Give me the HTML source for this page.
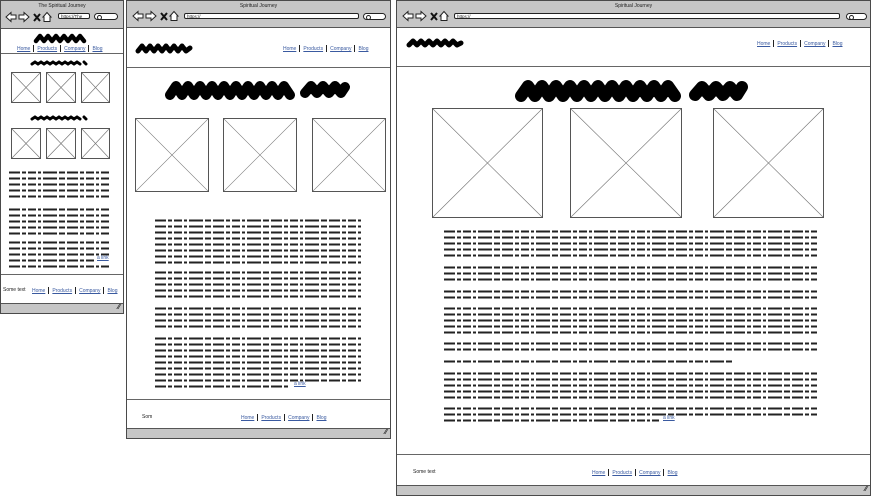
<!DOCTYPE html>
<html><head><meta charset="utf-8"><style>
*{margin:0;padding:0;box-sizing:border-box}
body{width:872px;height:500px;background:#fff;position:relative;overflow:hidden;font-family:"Liberation Sans",sans-serif}
.br{position:absolute;border:1.5px solid #4a4a4a;background:#fff;overflow:hidden}
.tb{position:absolute;left:0;right:0;top:0;background:#c6c6c6;border-bottom:1.5px solid #555}
.title{position:absolute;top:2px;left:0;right:0;text-align:center;font-size:5px;color:#222}
.url{position:absolute;background:#fff;border:1px solid #222;border-radius:2px;height:6px;font-size:4.5px;line-height:5px;padding-left:2px;color:#222}
.pill{position:absolute;background:#fff;border:1px solid #222;border-radius:4px;height:7px}
.pill:before{content:"";position:absolute;left:2px;top:1px;width:3px;height:3px;border:0.8px solid #222;border-radius:50%}
.bb{position:absolute;left:0;right:0;bottom:0;height:10px;background:#c6c6c6;border-top:1px solid #555}
.bb:after{content:"⁄⁄";position:absolute;right:3px;top:0;font-size:7px;font-weight:bold;color:#222}
.hl{position:absolute;left:0;right:0;height:0;border-top:1.5px solid #666}
.nav{position:absolute;font-size:5px;color:#3a5aa0;white-space:nowrap}
.nav a{color:#3a5aa0;text-decoration:underline}
.nav i{display:inline-block;width:1px;height:7px;background:#222;margin:0 3px;vertical-align:-2px}
.ft{position:absolute;font-size:5px;color:#222}
.img{position:absolute;border:1.3px solid #555;background:#fff}
.img svg{position:absolute;left:0;top:0;width:100%;height:100%}
.tx{position:absolute;background:repeating-linear-gradient(to bottom,transparent 0 .5px,#222 .5px 2.3px,transparent 2.3px 6px);
-webkit-mask-image:repeating-linear-gradient(to right,#000 0 11px,transparent 11px 13px,#000 13px 17px,transparent 17px 19px,#000 19px 27px,transparent 27px 29px,#000 29px 32px,transparent 32px 34px,#000 34px 48px,transparent 48px 50px,#000 50px 56px,transparent 56px 58px)}
.lk{position:absolute;font-size:5px;color:#3a5aa0;text-decoration:underline}
svg.sq{position:absolute}
</style></head><body>

<!-- Browser 1 -->
<div class="br" style="left:0;top:0;width:124px;height:314px">
 <div class="tb" style="height:28px">
  <div class="title">The Spiritual Journey</div>
  <svg style="position:absolute;left:4px;top:10px" width="52" height="12" viewBox="0 0 52 12">
   <path d="M1 6 L6 1.5 L6 4 L11 4 L11 8 L6 8 L6 10.5 Z" fill="#fff" stroke="#222" stroke-width="1"/>
   <path d="M24 6 L19 1.5 L19 4 L14 4 L14 8 L19 8 L19 10.5 Z" fill="#fff" stroke="#222" stroke-width="1"/>
   <path d="M29 3 L35 10 M35 3 L29 10" stroke="#111" stroke-width="2"/>
   <path d="M38 6 L42 1.5 L46 6 L45 6 L45 10.5 L39 10.5 L39 6 Z" fill="#fff" stroke="#222" stroke-width="1"/>
  </svg>
  <div class="url" style="left:57px;top:12px;width:32px">https://The</div>
  <div class="pill" style="left:93px;top:12px;width:24px"></div>
 </div>
 <svg class="sq" style="left:32px;top:31px" width="56" height="12" viewBox="0 0 56 12"><path d="M3 9 l4 -5 4 5 4 -5 4 5 4 -5 4 5 4 -5 4 5 4 -5 4 5 4 -5 4 5" fill="none" stroke="#000" stroke-width="4.5" stroke-linecap="round" stroke-linejoin="round"/></svg>
 <div class="nav" style="left:16px;top:44px"><a>Home</a><i></i><a>Products</a><i></i><a>Company</a><i></i><a>Blog</a></div>
 <div class="hl" style="top:52px"></div>
 <svg class="sq" style="left:29px;top:58px" width="62" height="8" viewBox="0 0 62 8"><path d="M2 5 l3 -2 3 2 3 -2 3 2 3 -2 3 2 3 -2 3 2 3 -2 3 2 3 -2 3 2 3 -2 3 2 3 -2 3 2 M54 3 l2 2" fill="none" stroke="#000" stroke-width="3" stroke-linecap="round"/></svg>
 <div class="img" style="left:10px;top:71px;width:30px;height:31px"><svg viewBox="0 0 10 10" preserveAspectRatio="none"><path d="M0 0L10 10M10 0L0 10" stroke="#777" stroke-width=".25"/></svg></div>
 <div class="img" style="left:45px;top:71px;width:30px;height:31px"><svg viewBox="0 0 10 10" preserveAspectRatio="none"><path d="M0 0L10 10M10 0L0 10" stroke="#777" stroke-width=".25"/></svg></div>
 <div class="img" style="left:80px;top:71px;width:29px;height:31px"><svg viewBox="0 0 10 10" preserveAspectRatio="none"><path d="M0 0L10 10M10 0L0 10" stroke="#777" stroke-width=".25"/></svg></div>
 <svg class="sq" style="left:29px;top:113px" width="62" height="8" viewBox="0 0 62 8"><path d="M2 5 l3 -2 3 2 3 -2 3 2 3 -2 3 2 3 -2 3 2 3 -2 3 2 3 -2 3 2 3 -2 3 2 3 -2 3 2 M54 3 l2 2" fill="none" stroke="#000" stroke-width="3" stroke-linecap="round"/></svg>
 <div class="img" style="left:10px;top:127px;width:30px;height:31px"><svg viewBox="0 0 10 10" preserveAspectRatio="none"><path d="M0 0L10 10M10 0L0 10" stroke="#777" stroke-width=".25"/></svg></div>
 <div class="img" style="left:45px;top:127px;width:30px;height:31px"><svg viewBox="0 0 10 10" preserveAspectRatio="none"><path d="M0 0L10 10M10 0L0 10" stroke="#777" stroke-width=".25"/></svg></div>
 <div class="img" style="left:80px;top:127px;width:29px;height:31px"><svg viewBox="0 0 10 10" preserveAspectRatio="none"><path d="M0 0L10 10M10 0L0 10" stroke="#777" stroke-width=".25"/></svg></div>
 <div class="tx" style="left:8px;top:170px;width:100px;height:27px"></div>
 <div class="tx" style="left:8px;top:207px;width:100px;height:27px"></div>
 <div class="tx" style="left:8px;top:240px;width:100px;height:15px"></div>
 <div class="tx" style="left:8px;top:258px;width:86px;height:3px"></div>
 <div class="lk" style="left:96px;top:254px">a link</div>
 <div class="tx" style="left:8px;top:264px;width:100px;height:3px"></div>
 <div class="hl" style="top:273px"></div>
 <div class="ft" style="left:2px;top:286px">Some text</div>
 <div class="nav" style="left:31px;top:286px"><a>Home</a><i></i><a>Products</a><i></i><a>Company</a><i></i><a>Blog</a></div>
 <div class="bb"></div>
</div>

<!-- Browser 2 -->
<div class="br" style="left:126px;top:0;width:265px;height:439px">
 <div class="tb" style="height:27px">
  <div class="title">Spiritual Journey</div>
  <svg style="position:absolute;left:5px;top:9px" width="52" height="12" viewBox="0 0 52 12">
   <path d="M1 6 L6 1.5 L6 4 L11 4 L11 8 L6 8 L6 10.5 Z" fill="#fff" stroke="#222" stroke-width="1"/>
   <path d="M24 6 L19 1.5 L19 4 L14 4 L14 8 L19 8 L19 10.5 Z" fill="#fff" stroke="#222" stroke-width="1"/>
   <path d="M29 3 L35 10 M35 3 L29 10" stroke="#111" stroke-width="2"/>
   <path d="M38 6 L42 1.5 L46 6 L45 6 L45 10.5 L39 10.5 L39 6 Z" fill="#fff" stroke="#222" stroke-width="1"/>
  </svg>
  <div class="url" style="left:57px;top:12px;width:175px">https://</div>
  <div class="pill" style="left:236px;top:12px;width:23px"></div>
 </div>
 <svg class="sq" style="left:8px;top:40px" width="58" height="14" viewBox="0 0 58 14"><path d="M3 10 l4 -5 4 5 4 -5 4 5 4 -5 4 5 4 -5 4 5 4 -5 4 5 4 -5 4 5 4 -3" fill="none" stroke="#000" stroke-width="5" stroke-linecap="round" stroke-linejoin="round"/></svg>
 <div class="nav" style="left:156px;top:44px"><a>Home</a><i></i><a>Products</a><i></i><a>Company</a><i></i><a>Blog</a></div>
 <div class="hl" style="top:66px"></div>
 <svg class="sq" style="left:38px;top:76px" width="190" height="24" viewBox="0 0 190 24"><path d="M5 18 l6 -9 6 9 6 -9 6 9 6 -9 6 9 6 -9 6 9 6 -9 6 9 6 -9 6 9 6 -9 6 9 6 -9 6 9 6 -9 6 9 6 -9 6 9 M140 16 l6 -7 6 7 6 -7 6 7 6 -7 6 7 4 -6" fill="none" stroke="#000" stroke-width="10" stroke-linecap="round" stroke-linejoin="round"/></svg>
 <div class="img" style="left:8px;top:117px;width:74px;height:74px"><svg viewBox="0 0 10 10" preserveAspectRatio="none"><path d="M0 0L10 10M10 0L0 10" stroke="#777" stroke-width=".08"/></svg></div>
 <div class="img" style="left:96px;top:117px;width:74px;height:74px"><svg viewBox="0 0 10 10" preserveAspectRatio="none"><path d="M0 0L10 10M10 0L0 10" stroke="#777" stroke-width=".08"/></svg></div>
 <div class="img" style="left:185px;top:117px;width:74px;height:74px"><svg viewBox="0 0 10 10" preserveAspectRatio="none"><path d="M0 0L10 10M10 0L0 10" stroke="#777" stroke-width=".08"/></svg></div>
 <div class="tx" style="left:28px;top:218px;width:206px;height:45px"></div>
 <div class="tx" style="left:28px;top:270px;width:206px;height:27px"></div>
 <div class="tx" style="left:28px;top:306px;width:206px;height:21px"></div>
 <div class="tx" style="left:28px;top:336px;width:206px;height:45px"></div>
 <div class="tx" style="left:28px;top:384px;width:135px;height:3px"></div>
 <div class="lk" style="left:167px;top:380px">a link</div>
 <div class="hl" style="top:398px"></div>
 <div class="ft" style="left:15px;top:413px">Som</div>
 <div class="nav" style="left:114px;top:413px"><a>Home</a><i></i><a>Products</a><i></i><a>Company</a><i></i><a>Blog</a></div>
 <div class="bb"></div>
</div>

<!-- Browser 3 -->
<div class="br" style="left:396px;top:0;width:475px;height:496px">
 <div class="tb" style="height:27px">
  <div class="title">Spiritual Journey</div>
  <svg style="position:absolute;left:5px;top:9px" width="52" height="12" viewBox="0 0 52 12">
   <path d="M1 6 L6 1.5 L6 4 L11 4 L11 8 L6 8 L6 10.5 Z" fill="#fff" stroke="#222" stroke-width="1"/>
   <path d="M24 6 L19 1.5 L19 4 L14 4 L14 8 L19 8 L19 10.5 Z" fill="#fff" stroke="#222" stroke-width="1"/>
   <path d="M29 3 L35 10 M35 3 L29 10" stroke="#111" stroke-width="2"/>
   <path d="M38 6 L42 1.5 L46 6 L45 6 L45 10.5 L39 10.5 L39 6 Z" fill="#fff" stroke="#222" stroke-width="1"/>
  </svg>
  <div class="url" style="left:57px;top:12px;width:386px">https://</div>
  <div class="pill" style="left:449px;top:12px;width:21px"></div>
 </div>
 <svg class="sq" style="left:9px;top:35px" width="58" height="14" viewBox="0 0 58 14"><path d="M3 9 l4 -4 4 4 4 -4 4 4 4 -4 4 4 4 -4 4 4 4 -4 4 4 4 -4 4 4 4 -2" fill="none" stroke="#000" stroke-width="5" stroke-linecap="round" stroke-linejoin="round"/></svg>
 <div class="nav" style="left:360px;top:39px"><a>Home</a><i></i><a>Products</a><i></i><a>Company</a><i></i><a>Blog</a></div>
 <div class="hl" style="top:65px"></div>
 <svg class="sq" style="left:118px;top:75px" width="240" height="28" viewBox="0 0 240 28"><path d="M6 20 l7 -10 7 10 7 -10 7 10 7 -10 7 10 7 -10 7 10 7 -10 7 10 7 -10 7 10 7 -10 7 10 7 -10 7 10 7 -10 7 10 7 -10 7 10 7 -10 7 10 M180 19 l7 -8 7 8 7 -8 7 8 7 -8 7 8 5 -8" fill="none" stroke="#000" stroke-width="12" stroke-linecap="round" stroke-linejoin="round"/></svg>
 <div class="img" style="left:35px;top:107px;width:111px;height:110px"><svg viewBox="0 0 10 10" preserveAspectRatio="none"><path d="M0 0L10 10M10 0L0 10" stroke="#777" stroke-width=".06"/></svg></div>
 <div class="img" style="left:173px;top:107px;width:112px;height:110px"><svg viewBox="0 0 10 10" preserveAspectRatio="none"><path d="M0 0L10 10M10 0L0 10" stroke="#777" stroke-width=".06"/></svg></div>
 <div class="img" style="left:316px;top:107px;width:111px;height:110px"><svg viewBox="0 0 10 10" preserveAspectRatio="none"><path d="M0 0L10 10M10 0L0 10" stroke="#777" stroke-width=".06"/></svg></div>
 <div class="tx" style="left:47px;top:229px;width:373px;height:27px"></div>
 <div class="tx" style="left:47px;top:265px;width:373px;height:15px"></div>
 <div class="tx" style="left:47px;top:289px;width:373px;height:9px"></div>
 <div class="tx" style="left:47px;top:306px;width:373px;height:27px"></div>
 <div class="tx" style="left:47px;top:341px;width:373px;height:9px"></div>
 <div class="tx" style="left:47px;top:359px;width:290px;height:3px"></div>
 <div class="tx" style="left:47px;top:371px;width:373px;height:27px"></div>
 <div class="tx" style="left:47px;top:406px;width:373px;height:9px"></div>
 <div class="tx" style="left:47px;top:418px;width:215px;height:3px"></div>
 <div class="lk" style="left:266px;top:414px">a link</div>
 <div class="hl" style="top:453px"></div>
 <div class="ft" style="left:16px;top:468px">Some text</div>
 <div class="nav" style="left:195px;top:468px"><a>Home</a><i></i><a>Products</a><i></i><a>Company</a><i></i><a>Blog</a></div>
 <div class="bb"></div>
</div>
</body></html>
